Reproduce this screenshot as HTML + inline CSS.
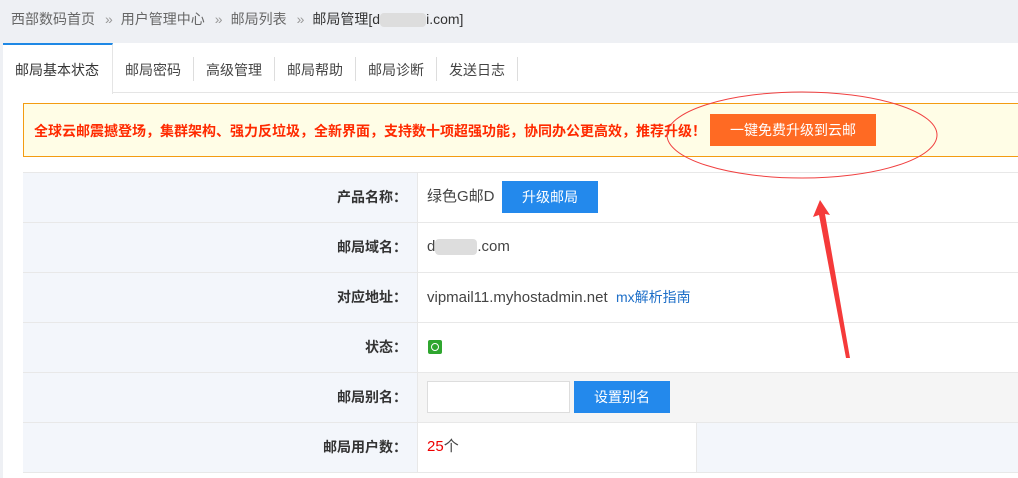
<!DOCTYPE html>
<html><head><meta charset="utf-8"><style>
*{margin:0;padding:0;box-sizing:border-box}
body{width:1018px;height:478px;overflow:hidden;background:#eef0f4;font-family:"Liberation Sans","Noto Sans CJK SC",sans-serif;font-size:14px;color:#333;position:relative}
.a{position:absolute}
.crumb{top:9px;left:11px;font-size:14px;color:#666;white-space:nowrap}
.crumb span.s{color:#999;margin:0 8px 0 10px;font-size:14px}
.main{left:3px;top:43px;right:0;bottom:0;background:#fff}
.tabbar{left:3px;top:43px;right:0;height:50px;background:#fff;border-bottom:1px solid #e5e5e5}
.tab{top:60px;font-size:14px;color:#444;white-space:nowrap}
.sep{top:57px;width:1px;height:24px;background:#ddd}
.act{left:3px;top:43px;width:110px;height:51px;background:#fff;border-top:2px solid #1e88e5;border-right:1px solid #e5e5e5}
.banner{left:23px;top:103px;right:-2px;height:54px;background:#fffde6;border:1px solid #f39c12}
.btxt{left:34px;top:121px;color:#ff2a00;font-weight:bold;font-size:14px;white-space:nowrap}
.obtn{left:710px;top:114px;width:166px;height:32px;background:#ff6a23;color:#fff;text-align:center;line-height:32px;font-size:14px}
.row{left:23px;right:0;height:50px;border-bottom:1px solid #e8e8e8}
.lab{left:23px;width:395px;height:50px;background:#f3f6fb;border-right:1px solid #e8e8e8;text-align:right;padding-right:10px;line-height:50px;font-weight:bold;color:#333}
.val{left:427px;line-height:50px;color:#444;font-size:15px;white-space:nowrap}
.bbtn{background:#2389ec;color:#fff;text-align:center;font-size:14px}
</style></head><body>
<div class="a crumb">西部数码首页<span class="s">»</span>用户管理中心<span class="s">»</span>邮局列表<span class="s">»</span><span style="color:#333">邮局管理[d<span style="display:inline-block;width:46px;height:14px;background:#ddd;vertical-align:middle;border-radius:4px"></span>i.com]</span></div>
<div class="a main"></div>
<div class="a tabbar"></div>
<div class="a act"></div>
<div class="a tab" style="left:15px;color:#333">邮局基本状态</div>
<div class="a tab" style="left:125px">邮局密码</div>
<div class="a sep" style="left:193px"></div>
<div class="a tab" style="left:206px">高级管理</div>
<div class="a sep" style="left:274px"></div>
<div class="a tab" style="left:287px">邮局帮助</div>
<div class="a sep" style="left:355px"></div>
<div class="a tab" style="left:368px">邮局诊断</div>
<div class="a sep" style="left:436px"></div>
<div class="a tab" style="left:449px">发送日志</div>
<div class="a sep" style="left:517px"></div>
<div class="a banner"></div>
<div class="a btxt">全球云邮震撼登场，集群架构、强力反垃圾，全新界面，支持数十项超强功能，协同办公更高效，推荐升级！</div>
<div class="a obtn">一键免费升级到云邮</div>

<div class="a" style="left:23px;top:172px;right:0;height:1px;background:#e8e8e8"></div>
<div class="a row" style="top:173px;height:50px"></div>
<div class="a lab" style="top:173px;height:49px;line-height:49px">产品名称：</div>
<div class="a val" style="top:172px">绿色G邮D</div>
<div class="a bbtn" style="left:502px;top:181px;width:96px;height:32px;line-height:32px">升级邮局</div>

<div class="a row" style="top:223px;height:50px"></div>
<div class="a lab" style="top:223px;height:49px;line-height:49px">邮局域名：</div>
<div class="a val" style="top:222px">d<span style="display:inline-block;width:42px;height:16px;background:#ddd;vertical-align:middle;border-radius:4px"></span>.com</div>

<div class="a row" style="top:273px;height:50px"></div>
<div class="a lab" style="top:273px;height:49px;line-height:49px">对应地址：</div>
<div class="a val" style="top:272px">vipmail11.myhostadmin.net&nbsp;&nbsp;<span style="color:#1e6fc8;font-size:14px">mx解析指南</span></div>

<div class="a row" style="top:323px;height:50px"></div>
<div class="a lab" style="top:323px;height:49px;line-height:49px">状态：</div>
<div class="a" style="left:428px;top:340px;width:14px;height:14px;background:#2fa62f;border-radius:2px"><div style="position:absolute;left:3px;top:3px;width:8px;height:8px;border:1.5px solid #fff;border-radius:50%"></div></div>

<div class="a row" style="top:373px;height:50px;background:#f5f5f5"></div>
<div class="a lab" style="top:373px;height:49px;line-height:49px">邮局别名：</div>
<div class="a" style="left:427px;top:381px;width:143px;height:32px;background:#fff;border:1px solid #ddd"></div>
<div class="a bbtn" style="left:574px;top:381px;width:96px;height:32px;line-height:32px">设置别名</div>

<div class="a row" style="top:423px;height:50px;background:#f3f6fb"></div>
<div class="a" style="left:418px;top:423px;width:279px;height:49px;background:#fff;border-right:1px solid #e8e8e8"></div>
<div class="a lab" style="top:423px;height:49px;line-height:49px">邮局用户数：</div>
<div class="a val" style="top:422px"><span style="color:#e00">25</span>个</div>

<svg class="a" style="left:0;top:0" width="1018" height="478">
<ellipse cx="802" cy="135" rx="135" ry="43" fill="none" stroke="#f04040" stroke-width="1"/>
<polygon points="820,200 830,215 825,214 850,358 846,358 819,215 813,217" fill="#f53a3a"/>
</svg>
</body></html>
